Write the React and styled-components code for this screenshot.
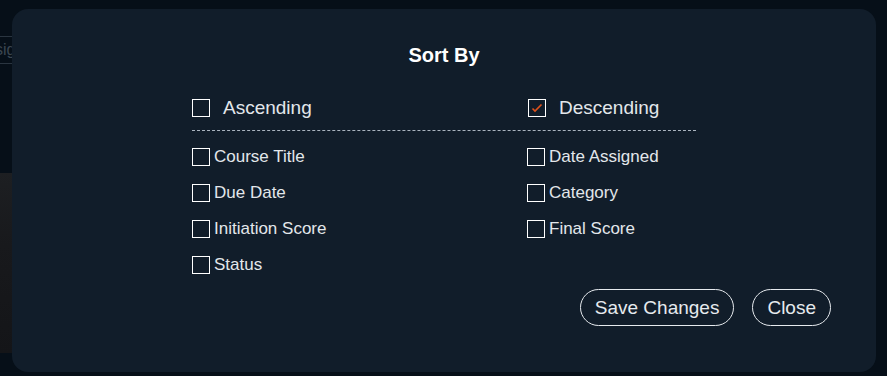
import React, { useState } from 'react';
import styled, { createGlobalStyle } from 'styled-components';

const Global = createGlobalStyle`
  html, body {
    margin: 0;
    padding: 0;
    background: #060f18;
    font-family: "Liberation Sans", Arial, sans-serif;
  }
`;

const Page = styled.div`
  position: relative;
  width: 887px;
  height: 376px;
  overflow: hidden;
  background: #060f18;
`;

const BehindSearch = styled.div`
  position: absolute;
  top: 36px;
  left: -16px;
  width: 120px;
  height: 28px;
  border: 1px solid #2a3540;
  color: #3b4651;
  font-size: 16px;
  line-height: 26px;
  padding-left: 10px;
  box-sizing: border-box;
`;

const BehindImage = styled.div`
  position: absolute;
  top: 173px;
  left: 0;
  width: 40px;
  height: 180px;
  background: linear-gradient(180deg, #1d1f22 0%, #18191c 40%, #141518 100%);
`;

const Modal = styled.div`
  position: absolute;
  top: 9px;
  left: 12px;
  width: 864px;
  height: 363px;
  box-sizing: border-box;
  border-radius: 16px;
  background: #111d2a;
  padding: 34px 45px 0 0;
  display: flex;
  flex-direction: column;
  align-items: center;
`;

const Title = styled.h2`
  margin: 0 0 0 45px;
  color: #ffffff;
  font-size: 20px;
  font-weight: 700;
  line-height: 24px;
`;

const Content = styled.div`
  width: 504px;
  margin: 32px 0 0 45px;
`;

const OrderRow = styled.div`
  display: grid;
  grid-template-columns: 336px 1fr;
  padding-bottom: 13px;
  border-bottom: 1px dashed #aab4bf;
`;

const FieldGrid = styled.div`
  display: grid;
  grid-template-columns: 335px 1fr;
  row-gap: 18px;
  padding-top: 17px;
`;

const Option = styled.label`
  display: flex;
  align-items: center;
  gap: ${p => (p.$big ? '13px' : '4px')};
  color: #e3e7eb;
  font-size: ${p => (p.$big ? '19px' : '17px')};
  line-height: 18px;
  cursor: pointer;
`;

const Box = styled.span`
  width: 18px;
  height: 18px;
  box-sizing: border-box;
  border: 1.5px solid #ffffff;
  display: inline-flex;
  align-items: center;
  justify-content: center;
  flex: none;
`;

const Actions = styled.div`
  align-self: flex-end;
  display: flex;
  gap: 18px;
  margin-top: 15px;
`;

const PillButton = styled.button`
  height: 37px;
  padding: 0 14px;
  border: 1px solid #e6eaee;
  border-radius: 19px;
  background: transparent;
  color: #e6eaee;
  font-family: "Liberation Sans", Arial, sans-serif;
  font-size: 19px;
  cursor: pointer;
`;

function Check({ checked, label, big, onToggle }) {
  return (
    <Option $big={big} onClick={onToggle}>
      <Box>
        {checked && (
          <svg width="12" height="10" viewBox="0 0 12 10">
            <path d="M1.5 5.5 L4 8 L10.5 1.5" fill="none" stroke="#e0521b" strokeWidth="1.6" />
          </svg>
        )}
      </Box>
      {label}
    </Option>
  );
}

const fields = [
  'Course Title', 'Date Assigned',
  'Due Date', 'Category',
  'Initiation Score', 'Final Score',
  'Status',
];

export default function App() {
  const [order, setOrder] = useState('desc');
  const [picked, setPicked] = useState([]);

  const toggle = f =>
    setPicked(picked.includes(f) ? picked.filter(x => x !== f) : [...picked, f]);

  return (
    <Page>
      <Global />
      <BehindSearch>sig</BehindSearch>
      <BehindImage />
      <Modal>
        <Title>Sort By</Title>
        <Content>
          <OrderRow>
            <Check big label="Ascending" checked={order === 'asc'} onToggle={() => setOrder('asc')} />
            <Check big label="Descending" checked={order === 'desc'} onToggle={() => setOrder('desc')} />
          </OrderRow>
          <FieldGrid>
            {fields.map(f => (
              <Check key={f} label={f} checked={picked.includes(f)} onToggle={() => toggle(f)} />
            ))}
          </FieldGrid>
        </Content>
        <Actions>
          <PillButton>Save Changes</PillButton>
          <PillButton>Close</PillButton>
        </Actions>
      </Modal>
    </Page>
  );
}
